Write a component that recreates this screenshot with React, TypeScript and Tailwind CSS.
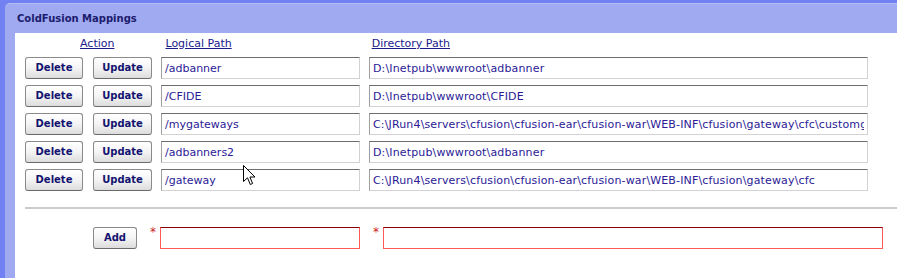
import React from 'react';

const MAPPINGS = [
  { logical: '/adbanner', directory: 'D:\\Inetpub\\wwwroot\\adbanner' },
  { logical: '/CFIDE', directory: 'D:\\Inetpub\\wwwroot\\CFIDE' },
  {
    logical: '/mygateways',
    directory: 'C:\\JRun4\\servers\\cfusion\\cfusion-ear\\cfusion-war\\WEB-INF\\cfusion\\gateway\\cfc\\customgateways',
  },
  { logical: '/adbanners2', directory: 'D:\\Inetpub\\wwwroot\\adbanner' },
  {
    logical: '/gateway',
    directory: 'C:\\JRun4\\servers\\cfusion\\cfusion-ear\\cfusion-war\\WEB-INF\\cfusion\\gateway\\cfc',
  },
];

const btn =
  'h-[22px] rounded-[3px] border border-[#8a8a8a] border-b-[#6a6a6a] bg-gradient-to-b from-white via-[#f4f4f4] to-[#dcdcdc] text-[10px] font-bold text-[#141470] leading-none';

const field =
  'h-[22px] border border-[#d2d2d2] border-t-[#6e6e6e] border-l-[#a0a0a0] bg-white px-[3px] text-[11px] text-[#2a1a96] outline-none';

const reqField =
  'h-[22px] border border-[#ff5a5a] border-t-[#8a0000] bg-white px-[3px] text-[11px] outline-none';

function Cursor() {
  return (
    <svg className="absolute left-[243px] top-[165px]" width="14" height="21" viewBox="0 0 14 21">
      <path
        d="M0.5 0.5 L0.5 16.5 L4.5 12.8 L7.3 19.5 L9.6 18.5 L6.9 12 L12 12 Z"
        fill="#fff"
        stroke="#000"
        strokeWidth="1"
      />
    </svg>
  );
}

export default function App() {
  return (
    <div
      className="relative w-[897px] h-[278px] overflow-hidden bg-[#7181f1] pt-[3px] pl-[5px]"
      style={{ fontFamily: '"DejaVu Sans", Verdana, sans-serif' }}
    >
      <div className="flex flex-col h-full bg-[#a0aaf0] rounded-tl-[5px] border-t border-[#b4bcf6] pl-[10px]">
        {/* Panel title */}
        <div className="h-[29px] flex items-center pl-[2px] pb-[1px] text-[10px] font-bold text-[#1c1c6e]">
          ColdFusion Mappings
        </div>

        {/* Panel body */}
        <div className="flex-1 bg-white pl-[10px]">
          <div className="flex h-[24px] items-start pt-[3px] text-[11px] text-[#1a1a8c] underline">
            <span className="ml-[55px]">Action</span>
            <span className="ml-[51px]">Logical Path</span>
            <span className="ml-[140px]">Directory Path</span>
          </div>

          <div className="flex flex-col gap-[6px]">
            {MAPPINGS.map((m, i) => (
              <div key={i} className="flex items-center">
                <button className={`${btn} w-[58px]`}>Delete</button>
                <button className={`${btn} w-[59px] ml-[10px]`}>Update</button>
                <input readOnly value={m.logical} className={`${field} w-[199px] ml-[9px]`} />
                <input
                  readOnly
                  value={m.directory}
                  className={`${field} w-[499px] ml-[9px] tracking-[0.15px]`}
                />
              </div>
            ))}
          </div>

          <div className="mt-[16px] h-[2px] bg-[#c8cccc]" />

          <div className="flex items-start mt-[18px]">
            <button className={`${btn} w-[44px] ml-[68px]`}>Add</button>
            <span className="ml-[13px] mt-[-1px] text-[12px] leading-none text-[#cc2222]">*</span>
            <input readOnly value="" className={`${reqField} w-[200px] ml-[4px]`} />
            <span className="ml-[13px] mt-[-1px] text-[12px] leading-none text-[#cc2222]">*</span>
            <input readOnly value="" className={`${reqField} w-[500px] ml-[4px]`} />
          </div>
        </div>
      </div>
      <Cursor />
    </div>
  );
}
